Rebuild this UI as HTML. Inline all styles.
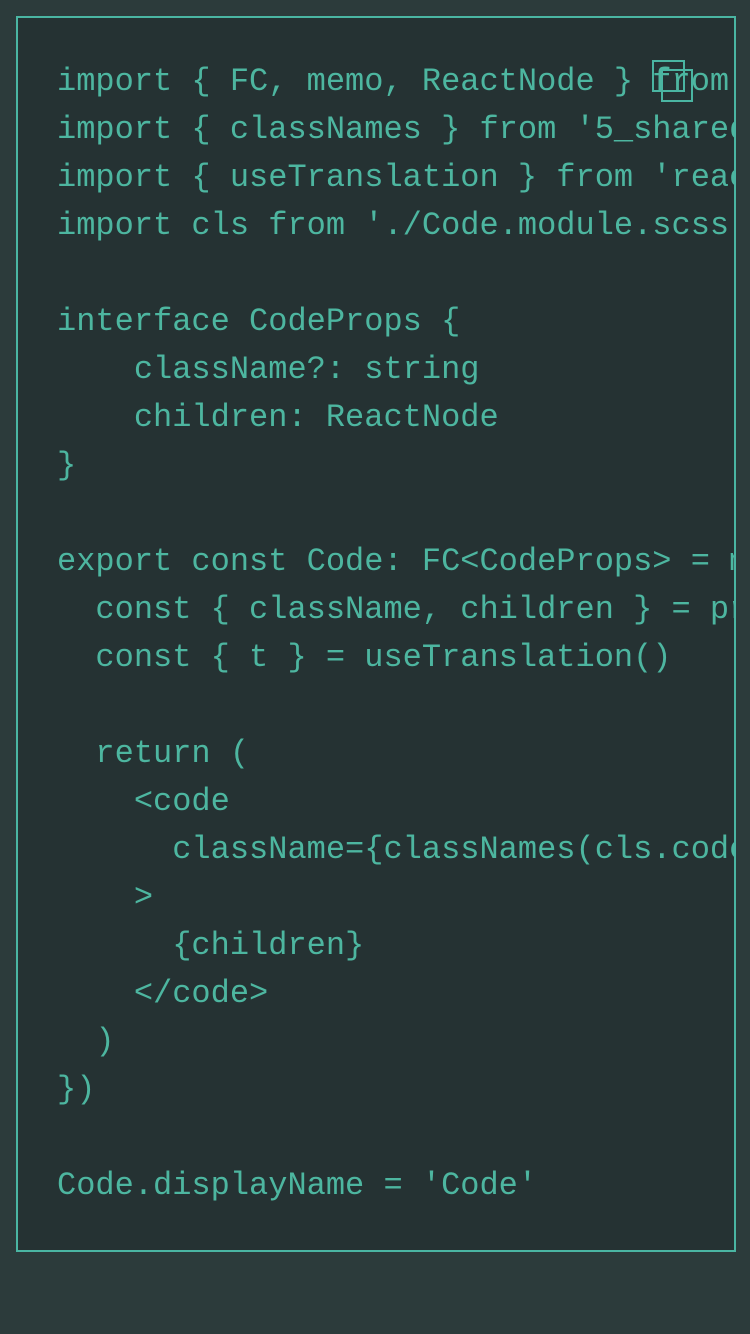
<!DOCTYPE html>
<html><head><meta charset="utf-8"><style>
html,body{margin:0;padding:0;background:#2c3b3b;width:750px;height:1334px;overflow:hidden}
.box{position:absolute;left:16px;top:16px;width:716px;height:1232px;border:2px solid #4ab5a2;background:#253233;overflow:hidden}
pre{margin:0;position:absolute;left:39px;top:40px;font-family:"Liberation Mono",monospace;font-size:32px;line-height:48px;color:#4db6a0;white-space:pre}
.ic{position:absolute;width:29px;height:28px;border:2px solid #4ab5a2}
</style></head><body>
<div class="box"><pre>import { FC, memo, ReactNode } from 'react'
import { classNames } from '5_shared/lib'
import { useTranslation } from 'react-i18next'
import cls from './Code.module.scss'

interface CodeProps {
    className?: string
    children: ReactNode
}

export const Code: FC&lt;CodeProps&gt; = memo((props) =&gt; {
  const { className, children } = props
  const { t } = useTranslation()

  return (
    &lt;code
      className={classNames(cls.code, {}, [className])}
    &gt;
      {children}
    &lt;/code&gt;
  )
})

Code.displayName = 'Code'</pre>
<div class="ic" style="left:634px;top:42px"></div>
<div class="ic" style="left:643px;top:51px;width:28px;height:29px"></div>
</div>
</body></html>
